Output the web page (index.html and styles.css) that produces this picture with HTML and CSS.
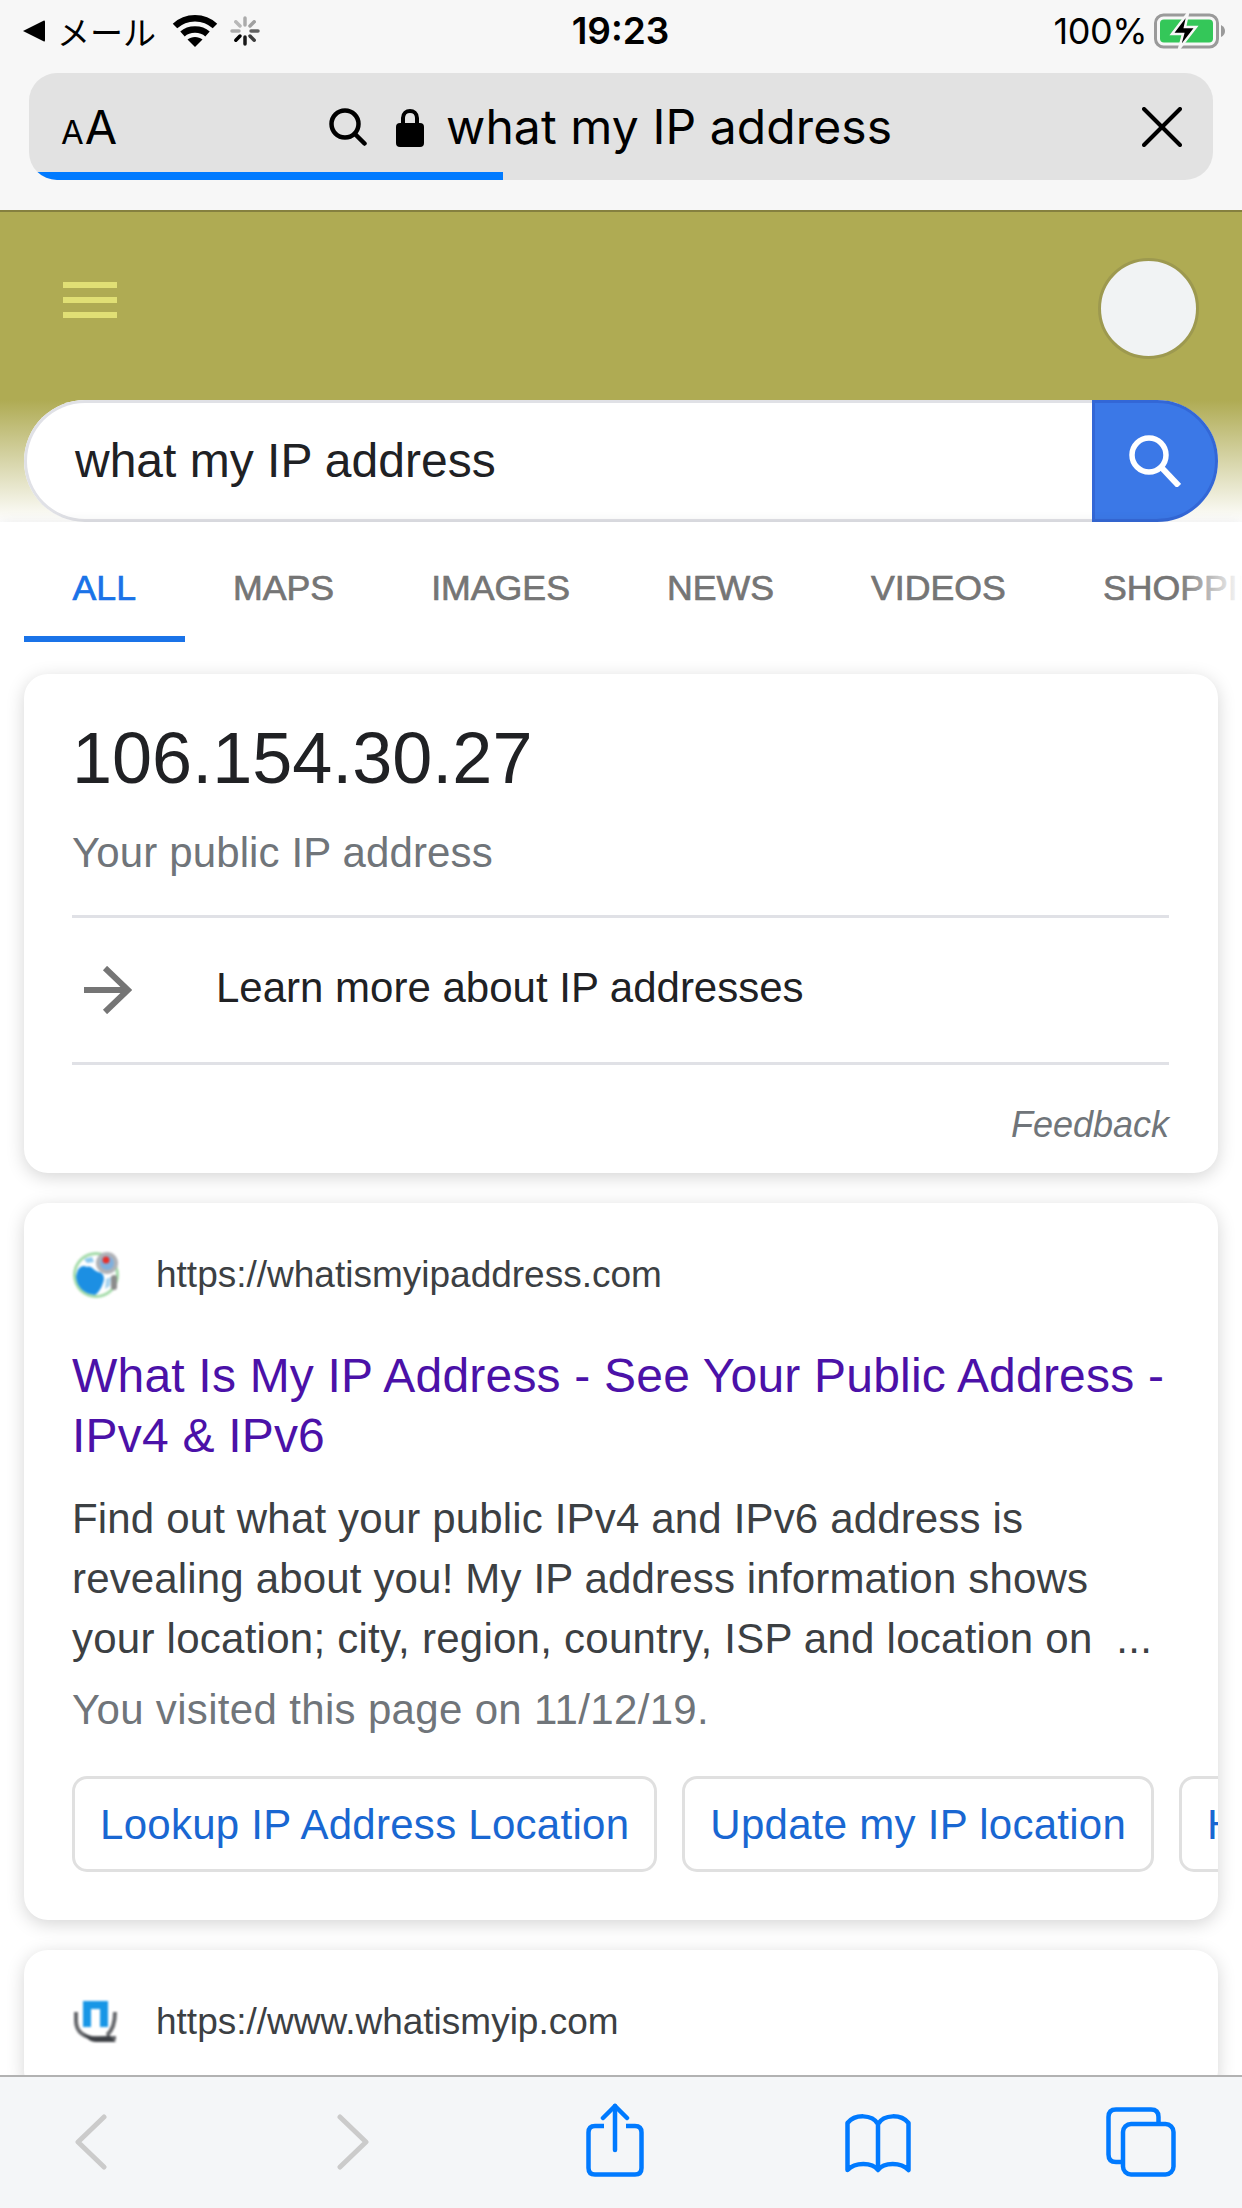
FILE: index.html
```html
<!DOCTYPE html>
<html lang="en">
<head>
    <meta charset="UTF-8">
    <meta name="viewport" content="width=device-width, initial-scale=1.0">
    <title>what my IP address</title>
    <link rel="stylesheet" href="styles.css">
</head>
<body>
<div class="phone">
    <div class="browser-top">
        <div class="status-bar">
            <div class="status-left">
                <svg class="back-tri" width="22" height="22" viewBox="0 0 22 22"><path d="M0 11 21 0.5Q22 0 22 2V20Q22 22 21 21.500Z" fill="#000"/></svg>
                <span class="carrier">メール</span>
                <svg class="wifi" width="46" height="34" viewBox="0 0 46 34" fill="none" stroke="#000" stroke-width="6.500">
                    <path d="M3 12C14 1.500 32 1.500 43 12"/>
                    <path d="M10.500 20C17 14 29 14 35.500 20"/>
                    <path d="M23 33 15.500 25.500C19.500 22 26.500 22 30.500 25.500Z" fill="#000" stroke="none"/>
                </svg>
                <svg class="spinner" width="30" height="30" viewBox="0 0 30 30" stroke-width="3.500" stroke-linecap="round" stroke="#000">
                    <line x1="15" y1="2" x2="15" y2="9" opacity=".3"/>
                    <line x1="24.200" y1="5.800" x2="20" y2="10" opacity=".35"/>
                    <line x1="28" y1="15" x2="21" y2="15" opacity=".6"/>
                    <line x1="24.200" y1="24.200" x2="20" y2="20" opacity=".75"/>
                    <line x1="15" y1="28" x2="15" y2="21" opacity=".9"/>
                    <line x1="5.800" y1="24.200" x2="10" y2="20"/>
                    <line x1="2" y1="15" x2="9" y2="15" opacity=".3"/>
                    <line x1="5.800" y1="5.800" x2="10" y2="10" opacity=".25"/>
                </svg>
            </div>
            <div class="clock">19:23</div>
            <div class="status-right">
                <span class="percent">100%</span>
                <svg class="battery" width="72" height="36" viewBox="0 0 72 36">
                    <rect x="1.500" y="2" width="62" height="32" rx="8" fill="none" stroke="#9a9a9a" stroke-width="3"/>
                    <rect x="6" y="6.500" width="53" height="23" rx="4" fill="#34c759"/>
                    <path d="M67 12Q71 14 71 18T67 24Z" fill="#9a9a9a"/>
                    <path d="M34 0 18 21H29L25 36 42 14H31Z" fill="#000" stroke="#f7f7f7" stroke-width="2.500"/>
                </svg>
            </div>
        </div>
        <div class="url-bar">
            <span class="text-size"><span class="small-a">A</span><span class="big-a">A</span></span>
            <div class="url-center">
                <svg width="38" height="38" viewBox="0 0 38 38" fill="none" stroke="#000" stroke-width="4.500" stroke-linecap="round">
                    <circle cx="16" cy="16" r="13.500"/>
                    <line x1="26" y1="26" x2="35.500" y2="35.500"/>
                </svg>
                <svg class="lock" width="28" height="40" viewBox="0 0 28 40">
                    <path d="M7 18V11C7 1.500 21 1.500 21 11V18" fill="none" stroke="#000" stroke-width="4"/>
                    <rect x="0" y="16" width="28" height="24" rx="4" fill="#000"/>
                </svg>
                <span class="url-text">what my IP address</span>
            </div>
            <svg class="url-close" width="40" height="40" viewBox="0 0 40 40" stroke="#000" stroke-width="4" stroke-linecap="round">
                <line x1="2" y1="2" x2="38" y2="38"/>
                <line x1="38" y1="2" x2="2" y2="38"/>
            </svg>
            <div class="progress"></div>
        </div>
    </div>

    <div class="page">
        <header class="search-header">
            <div class="header-row">
                <div class="menu-icon"><span></span><span></span><span></span></div>
                <div class="avatar"></div>
            </div>
            <div class="search-box">
                <div class="search-input">what my IP address</div>
                <div class="search-btn">
                    <svg width="52" height="52" viewBox="0 0 52 52" fill="none" stroke="#fff">
                        <circle cx="20" cy="20" r="17" stroke-width="5.500"/>
                        <line x1="32" y1="32" x2="50" y2="51" stroke-width="6"/>
                    </svg>
                </div>
            </div>
        </header>

        <nav class="tabs">
            <a class="tab active">ALL</a>
            <a class="tab">MAPS</a>
            <a class="tab">IMAGES</a>
            <a class="tab">NEWS</a>
            <a class="tab">VIDEOS</a>
            <a class="tab">SHOPPING</a>
            <div class="tabs-fade"></div>
        </nav>

        <main class="results">
            <section class="card ip-card">
                <div class="ip-value">106.154.30.27</div>
                <div class="ip-label">Your public IP address</div>
                <div class="learn-row">
                    <svg class="arrow" width="48" height="48" viewBox="0 0 48 48" fill="none" stroke="#757575" stroke-width="6">
                        <line x1="0" y1="24" x2="44" y2="24"/>
                        <polyline points="21,2 44,24 21,46"/>
                    </svg>
                    <span>Learn more about IP addresses</span>
                </div>
                <div class="feedback">Feedback</div>
            </section>

            <section class="card">
                <div class="site-row">
                    <svg class="favicon" width="48" height="48" viewBox="0 0 48 48">
                        <circle cx="24" cy="24" r="23" fill="#a3dba8"/>
                        <circle cx="24" cy="24" r="20" fill="#fff"/>
                        <path d="M4 26C5 18 9 13 15 16 19 14 21 19 26 21 32 22 33 27 31 32 29 38 26 42 23 44 12 43 5 36 4 26Z" fill="#1c8fe3"/>
                        <path d="M12 8 20 6 22 11 15 12Z" fill="#8cc9f0"/>
                        <path d="M34 28 39 26 38 35 33 38Z" fill="#a9d4ef"/>
                        <circle cx="35" cy="12" r="11" fill="#b0b2b7"/>
                        <circle cx="35" cy="12" r="7" fill="#7fb0de"/>
                        <circle cx="34" cy="9" r="3.500" fill="#e8302a"/>
                        <rect x="39" y="24" width="6" height="15" rx="3" fill="#8c8c8c"/>
                    </svg>
                    <span class="site-url">https://whatismyipaddress.com</span>
                </div>
                <h3 class="result-title">What Is My IP Address - See Your Public Address - IPv4 &amp; IPv6</h3>
                <p class="snippet">Find out what your public IPv4 and IPv6 address is<br>revealing about you! My IP address information shows<br><span class="snippet-last">your location; city, region, country, ISP and location on &nbsp;...</span></p>
                <p class="visited">You visited this page on 11/12/19.</p>
                <div class="chips">
                    <a class="chip">Lookup IP Address Location</a>
                    <a class="chip">Update my IP location</a>
                    <a class="chip">Hide my IP</a>
                </div>
            </section>

            <section class="card">
                <div class="site-row">
                    <svg class="favicon" width="48" height="48" viewBox="0 0 48 48" fill="none">
                        <path d="M4 14V23C4 35 14 40 24 40H44" stroke="#66686c" stroke-width="4"/>
                        <path d="M43 14C43 26 40 33 35 37" stroke="#66686c" stroke-width="4"/>
                        <path d="M11 34C16 40 30 40 37 37L44 44H24C18 44 14 40 11 34Z" fill="#3d4045"/>
                        <path d="M11 3H36V29H28V11H19V29H11Z" fill="#1796e6"/>
                    </svg>
                    <span class="site-url">https://www.whatismyip.com</span>
                </div>
            </section>
        </main>
    </div>

    <footer class="toolbar">
        <svg class="tool-back" width="32" height="56" viewBox="0 0 32 56" fill="none" stroke="#cbcbcb" stroke-width="5" stroke-linecap="round" stroke-linejoin="round"><polyline points="29,3 3,28 29,53"/></svg>
        <svg class="tool-forward" width="32" height="56" viewBox="0 0 32 56" fill="none" stroke="#cbcbcb" stroke-width="5" stroke-linecap="round" stroke-linejoin="round"><polyline points="3,3 29,28 3,53"/></svg>
        <svg class="tool-share" width="58" height="74" viewBox="0 0 58 74" fill="none" stroke="#007aff" stroke-width="4.500" stroke-linecap="round" stroke-linejoin="round">
            <path d="M18 23H9Q2.500 23 2.500 29.500V65Q2.500 71.500 9 71.500H49Q55.500 71.500 55.500 65V29.500Q55.500 23 49 23H40" stroke-linecap="butt"/>
            <line x1="29" y1="3" x2="29" y2="47"/>
            <polyline points="17,15 29,3 41,15"/>
        </svg>
        <svg class="tool-book" width="66" height="60" viewBox="0 0 66 60" fill="none" stroke="#007aff" stroke-width="4.500" stroke-linecap="round" stroke-linejoin="round">
            <path d="M33 11C27 1 10 1 2.500 10V57C10 49 27 49 33 57 39 49 56 49 63.500 57V10C56 1 39 1 33 11V56"/>
        </svg>
        <svg class="tool-tabs" width="70" height="70" viewBox="0 0 70 70" fill="none" stroke="#007aff" stroke-width="4.500">
            <path d="M16 55H10Q2.500 55 2.500 47.500V10Q2.500 2.500 10 2.500H45Q52.500 2.500 52.500 10V17"/>
            <rect x="17" y="17" width="50.500" height="50.500" rx="8"/>
        </svg>
    </footer>
</div>
</body>
</html>
```

FILE: styles.css
```css
* {
    box-sizing: border-box;
}
body {
    margin: 0;
    background: #fff;
    font-family: "Liberation Sans", Arial, sans-serif;
}
.phone {
    width: 1242px;
    height: 2208px;
    display: flex;
    flex-direction: column;
    overflow: hidden;
}

/* safari chrome */
.browser-top {
    height: 210px;
    flex: none;
    background: #f7f7f7;
    padding: 0 29px;
    font-family: Inter, "Noto Sans CJK JP", sans-serif;
    color: #000;
}
.status-bar {
    height: 73px;
    margin: 0 -29px;
    padding: 0 16px 12px 23px;
    display: grid;
    grid-template-columns: 1fr auto 1fr;
    align-items: center;
}
.status-left {
    display: flex;
    align-items: center;
}
.carrier {
    margin-left: 12px;
    font-family: "Noto Sans CJK JP", sans-serif;
    font-size: 33px;
    line-height: 40px;
    width: 100px;
    white-space: nowrap;
}
.wifi {
    margin-left: 15px;
}
.spinner {
    margin-left: 12px;
}
.clock {
    margin-right: 8px;
    font-size: 37px;
    font-weight: 600;
    line-height: 40px;
}
.status-right {
    display: flex;
    justify-content: flex-end;
    align-items: center;
    gap: 7px;
}
.percent {
    font-size: 36px;
    line-height: 40px;
    letter-spacing: -.5px;
}
.url-bar {
    position: relative;
    height: 107px;
    border-radius: 28px;
    background: #e2e2e2;
    overflow: hidden;
    display: flex;
    align-items: center;
    padding: 0 31px 0 32px;
}
.text-size {
    display: flex;
    align-items: baseline;
    width: 60px;
    padding-top: 6px;
    line-height: 50px;
}
.small-a {
    font-size: 33px;
}
.big-a {
    font-size: 47px;
    margin-left: 1px;
}
.url-center {
    display: flex;
    align-items: center;
    margin-left: 208px;
    flex: 1;
}
.lock {
    margin-left: 29px;
}
.url-text {
    margin-left: 22px;
    font-size: 48px;
    line-height: 60px;
    letter-spacing: .1px;
    white-space: nowrap;
}
.progress {
    position: absolute;
    left: 0;
    bottom: 0;
    width: 474px;
    height: 8px;
    background: #007aff;
}

/* google header */
.page {
    flex: 1;
    min-height: 0;
    overflow: hidden;
}
.search-header {
    height: 312px;
    border-top: 2px solid #85803f;
    background: linear-gradient(to bottom, #afab53 0, #afab53 188px, #fff 310px);
    padding: 0 24px;
}
.header-row {
    height: 188px;
    display: flex;
    justify-content: space-between;
    padding: 46px 19px 0 39px;
}
.menu-icon {
    width: 54px;
    padding-top: 24px;
}
.menu-icon span {
    display: block;
    height: 6px;
    margin-bottom: 9px;
    background: #e0df75;
}
.avatar {
    width: 101px;
    height: 101px;
    border-radius: 50%;
    background: #f1f3f4;
    border: 3px solid #9d994f;
}
.search-box {
    height: 122px;
    display: flex;
    border-radius: 61px;
    background: #fff;
}
.search-input {
    flex: 1;
    border: 3px solid #e0e1e6;
    border-right: 0;
    border-radius: 61px 0 0 61px;
    padding-left: 48px;
    font-size: 48px;
    line-height: 116px;
    color: #202124;
}
.search-btn {
    width: 126px;
    border: 3px solid #3367d6;
    border-radius: 0 61px 61px 0;
    background: #3b78e7;
    display: flex;
    align-items: center;
    justify-content: center;
}

/* tabs */
.tabs {
    position: relative;
    height: 120px;
    padding-left: 24px;
    display: flex;
    background: #fff;
    box-shadow: 0 3px 12px rgba(60, 64, 67, .18);
    overflow: hidden;
}
.tab {
    flex: none;
    height: 120px;
    padding: 41px 48.500px 0;
    font-size: 35.700px;
    line-height: 50px;
    color: #757575;
    -webkit-text-stroke: .7px currentColor;
}
.tab.active {
    color: #1a73e8;
    border-bottom: 6px solid #1a73e8;
}
.tabs-fade {
    position: absolute;
    right: 0;
    top: 0;
    width: 64px;
    height: 114px;
    background: linear-gradient(to right, rgba(255, 255, 255, 0), #fff);
}

/* result cards */
.results {
    position: relative;
    padding: 32px 24px 0;
    background: #fff;
}
.card {
    position: relative;
    width: 1194px;
    margin-bottom: 30px;
    padding: 48px 49px 48px 48px;
    background: #fff;
    border-radius: 24px;
    box-shadow: 0 4px 18px rgba(0, 0, 0, .17);
    color: #3c4043;
}
.ip-card {
    padding-bottom: 0;
}
.ip-value {
    font-size: 72px;
    line-height: 72px;
    color: #202124;
}
.ip-label {
    margin-top: 29px;
    padding-bottom: 32px;
    font-size: 42px;
    line-height: 60px;
    letter-spacing: .13px;
    color: #70757a;
    border-bottom: 3px solid #e0e1e6;
}
.learn-row {
    height: 147px;
    display: flex;
    align-items: center;
    border-bottom: 3px solid #e0e1e6;
    font-size: 42px;
    color: #202124;
}
.arrow {
    margin-left: 12px;
}
.learn-row span {
    margin-left: 84px;
    margin-top: -4px;
}
.feedback {
    height: 108px;
    padding-top: 39px;
    text-align: right;
    font-size: 36px;
    line-height: 42px;
    font-style: italic;
    color: #70757a;
}
.site-row {
    height: 48px;
    display: flex;
    align-items: center;
}
.favicon {
    flex: none;
    filter: blur(.8px);
}
.site-url {
    margin-left: 36px;
    font-size: 37px;
    line-height: 48px;
}
.result-title {
    margin: 47px 0 0;
    font-size: 48px;
    font-weight: normal;
    line-height: 60px;
    letter-spacing: .2px;
    color: #4b11a8;
}
.snippet {
    margin: 23px 0 0;
    font-size: 42px;
    line-height: 60px;
    letter-spacing: .16px;
    white-space: nowrap;
}
.snippet-last {
    letter-spacing: .25px;
}
.visited {
    margin: 11px 0 0;
    font-size: 42px;
    line-height: 60px;
    letter-spacing: .33px;
    color: #70757a;
}
.chips {
    margin: 36px -49px 0 0;
    display: flex;
    gap: 25px;
    overflow: hidden;
}
.chip {
    flex: none;
    height: 96px;
    padding: 0 25px;
    border: 3px solid #e0e0e0;
    border-radius: 15px;
    font-size: 42px;
    line-height: 91px;
    letter-spacing: .27px;
    color: #1967d2;
}

/* safari toolbar */
.toolbar {
    position: relative;
    height: 133px;
    flex: none;
    border-top: 2px solid #b2b2b2;
    background: #f4f6f8;
}
.toolbar svg {
    position: absolute;
}
.tool-back {
    left: 75px;
    top: 37px;
}
.tool-forward {
    left: 337px;
    top: 37px;
}
.tool-share {
    left: 586px;
    top: 26px;
}
.tool-book {
    left: 845px;
    top: 36px;
}
.tool-tabs {
    left: 1106px;
    top: 30px;
}
```
